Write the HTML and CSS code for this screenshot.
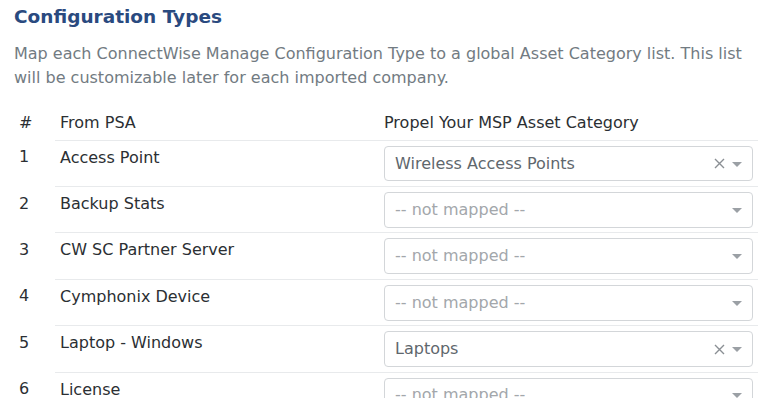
FILE: index.html
```html
<!DOCTYPE html>
<html>
  <head>
    <title>Configuration Types</title>
    <link rel="stylesheet" href="styles.css">
  </head>
  <body>
    <div class="panel">
      <h2 class="title">Configuration Types</h2>
      <p class="intro">Map each ConnectWise Manage Configuration Type to a global Asset Category list. This list will be customizable later for each imported company.</p>

      <table class="maptable">
        <thead>
          <tr>
            <th class="num">#</th>
            <th class="from">From PSA</th>
            <th class="to">Propel Your MSP Asset Category</th>
          </tr>
        </thead>
        <tbody>
          <tr>
            <td class="num">1</td>
            <td class="from">Access Point</td>
            <td class="to">
              <div class="picker">
                <span class="value">Wireless Access Points</span>
                <span class="clear"><svg width="11" height="11" viewBox="0 0 11 11"><path d="M1 1L10 10M10 1L1 10" stroke="#8a8f94" stroke-width="1.4"/></svg></span>
                <span class="caret"></span>
              </div>
            </td>
          </tr>
          <tr>
            <td class="num">2</td>
            <td class="from">Backup Stats</td>
            <td class="to">
              <div class="picker">
                <span class="value empty">-- not mapped --</span>
                <span class="caret"></span>
              </div>
            </td>
          </tr>
          <tr>
            <td class="num">3</td>
            <td class="from">CW SC Partner Server</td>
            <td class="to">
              <div class="picker">
                <span class="value empty">-- not mapped --</span>
                <span class="caret"></span>
              </div>
            </td>
          </tr>
          <tr>
            <td class="num">4</td>
            <td class="from">Cymphonix Device</td>
            <td class="to">
              <div class="picker">
                <span class="value empty">-- not mapped --</span>
                <span class="caret"></span>
              </div>
            </td>
          </tr>
          <tr>
            <td class="num">5</td>
            <td class="from">Laptop - Windows</td>
            <td class="to">
              <div class="picker">
                <span class="value">Laptops</span>
                <span class="clear"><svg width="11" height="11" viewBox="0 0 11 11"><path d="M1 1L10 10M10 1L1 10" stroke="#8a8f94" stroke-width="1.4"/></svg></span>
                <span class="caret"></span>
              </div>
            </td>
          </tr>
          <tr>
            <td class="num">6</td>
            <td class="from">License</td>
            <td class="to">
              <div class="picker">
                <span class="value empty">-- not mapped --</span>
                <span class="caret"></span>
              </div>
            </td>
          </tr>
        </tbody>
      </table>
    </div>
  </body>
</html>
```

FILE: styles.css
```css
body {
  margin: 0;
  font-family: "DejaVu Sans", sans-serif;
  color: #2b2f33;
  background: #fff;
}

.panel {
  padding: 4px 11px 0 14px;
}

.title {
  margin: 0;
  font-size: 18.5px;
  line-height: 26px;
  font-weight: bold;
  color: #2a4a7f;
}

.intro {
  margin: 12px 0 17px 0;
  font-size: 16px;
  line-height: 23.5px;
  color: #727b82;
}

.maptable {
  width: 100%;
  border-collapse: collapse;
  font-size: 16px;
}

.maptable th,
.maptable td {
  text-align: left;
  vertical-align: top;
  font-weight: normal;
  line-height: 24px;
  padding: 5px 5px 4.7px 5px;
}

.maptable td {
  border-top: 1px solid #e8eaec;
}

.maptable .num {
  width: 31px;
  border-top: none;
}

.maptable .from {
  width: 314px;
}

.picker {
  display: flex;
  align-items: center;
  height: 35.7px;
  box-sizing: border-box;
  border: 1px solid #d3d6d9;
  border-radius: 4px;
  padding: 0 10px;
}

.value {
  flex: 1;
  color: #5f676d;
}

.value.empty {
  color: #a3a7ab;
}

.clear {
  display: flex;
  margin-right: 7px;
}

.caret {
  width: 0;
  height: 0;
  border-left: 5px solid transparent;
  border-right: 5px solid transparent;
  border-top: 5px solid #9ba0a5;
  margin-top: 1px;
}
```
